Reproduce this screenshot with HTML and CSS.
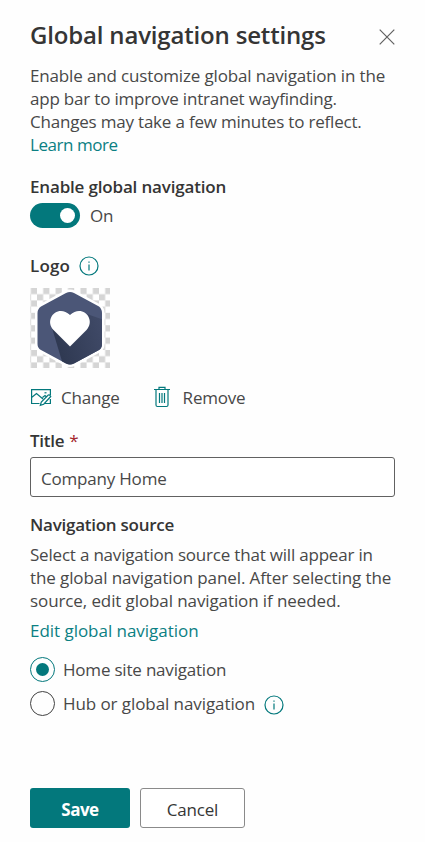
FILE: index.html
```html
<!DOCTYPE html>
<html lang="en">
<head>
<meta charset="utf-8">
<title>Global navigation settings</title>
<link rel="stylesheet" href="styles.css">
</head>
<body>
<main class="panel">
  <header class="header">
    <h1>Global navigation settings</h1>
    <button class="close" aria-label="Close"><svg width="16" height="16" viewBox="0 0 16 16"><path d="M.7.7l14.6 14.6M15.3.7L.7 15.3"/></svg></button>
  </header>
  <p class="intro"><span class="i1">Enable and customize global navigation in the</span><br><span class="i2">app bar to improve intranet wayfinding.</span><br><span class="i3">Changes may take a few minutes to reflect.</span><br><a class="learn">Learn more</a></p>
  <h2 class="enable-label"><span class="t-enable">Enable global navigation</span></h2>
  <div class="toggle-row"><span class="toggle"><span class="thumb"></span></span><span class="t-on">On</span></div>
  <div class="logo-label"><h2><span class="t-logo">Logo</span></h2><svg class="info" width="20" height="20" viewBox="0 0 20 20"><circle cx="10" cy="10" r="9"/><path d="M10 8.500v6M10 5.500v1.300"/></svg></div>
  <svg class="logo" width="80" height="80" viewBox="0 0 80 80">
    <defs>
      <pattern id="checks" x="-5.4" width="12.4" height="12.4" patternUnits="userSpaceOnUse"><path fill="#d5d5d5" d="M0 6.200h6.200v6.200H0zM6.200 0h6.200v6.200H6.200z"/></pattern>
      <linearGradient id="shade" x1="0" y1=".7" x2="1" y2=".4"><stop offset="0" stop-color="#2d374f"/><stop offset="1" stop-color="#414b69"/></linearGradient>
      <clipPath id="hex"><path d="M36 5Q40 2.800 44 5L69 18.500Q72 21 72 25V56Q72 60 69 62L44 75.500Q40 77.500 36 75.500L11 62Q7.500 60 7.500 56V25Q7.500 21 11 18.500Z"/></clipPath>
    </defs>
    <path fill="#fff" d="M0 0h80v80H0z"/><path fill="url(#checks)" d="M0 0h80v80H0z"/>
    <path fill="#fff" stroke="#fff" stroke-width="5" d="M36 5Q40 2.800 44 5L69 18.500Q72 21 72 25V56Q72 60 69 62L44 75.500Q40 77.500 36 75.500L11 62Q7.500 60 7.500 56V25Q7.500 21 11 18.500Z"/>
    <g clip-path="url(#hex)"><path fill="#4b5677" d="M0 0h80v80H0z"/><path fill="url(#shade)" d="M22 40L34 80H80V34L57 26Z"/></g>
    <path fill="#fff" d="M40 58.500L23.500 42C13.500 31 28 15.500 40 27C52 15.500 66.500 31 56.500 42Z"/>
  </svg>
  <div class="actions">
    <button class="change"><svg width="22" height="20" viewBox="0 0 22 20"><path d="M9.500 16.500H1.600V2.600H20.400V8M1.600 10.500L6.500 6.500L13 12M12.500 10.500L15 8.500L16 9.500M10.300 18.300L11.300 15L18.200 8Q20 7.500 20.700 9.500L13.700 17.200ZM15 16.500H20.400V12"/><path d="M14.500 5.800h2"/></svg><span class="t-change">Change</span></button>
    <button class="remove"><svg width="18" height="22" viewBox="0 0 18 22"><path d="M1 3.500h16M6 3.500V1.300h6V3.500M3 3.500V19Q3 20.500 4.500 20.500H13.500Q15 20.500 15 19V3.500M6.500 7v10M9 7v10M11.500 7v10"/></svg><span class="t-remove">Remove</span></button>
  </div>
  <h2 class="title-label"><span class="t-title">Title</span><b>*</b></h2>
  <div class="field"><span class="t-company">Company Home</span></div>
  <h2 class="source-label"><span class="t-source">Navigation source</span></h2>
  <p class="source"><span class="s1">Select a navigation source that will appear in</span><br><span class="s2">the global navigation panel. After selecting the</span><br><span class="s3">source, edit global navigation if needed.</span></p>
  <div class="edit"><a class="t-edit">Edit global navigation</a></div>
  <div class="radio selected"><i></i><span class="t-home">Home site navigation</span></div>
  <div class="radio"><i></i><span class="t-hub">Hub or global navigation</span><svg class="info" width="20" height="20" viewBox="0 0 20 20"><circle cx="10" cy="10" r="9"/><path d="M10 8.500v6M10 5.500v1.300"/></svg></div>
  <footer class="footer"><button class="save"><span class="t-save">Save</span></button><button class="cancel"><span class="t-cancel">Cancel</span></button></footer>
</main>
</body>
</html>
```
FILE: styles.css
```css
* { box-sizing: border-box; }
body { margin: 0; background: #fefefe; color: #484848; font: 400 17px/23px "Open Sans", "Noto Sans", sans-serif; letter-spacing: -.2px; }
h1, h2, p { margin: 0; }
h1, h2 { color: #353535; font-weight: 600; }
h2 { height: 24px; font-size: 17px; line-height: 24px; letter-spacing: -.25px; }
button { padding: 0; border: 0; background: transparent; color: inherit; font: inherit; letter-spacing: inherit; }
svg { display: block; flex: none; fill: none; stroke-width: 1.2; }
span, a { white-space: nowrap; }
a { color: #0b8083; }
.panel { height: 842px; padding: 16px 30px 14px; overflow: hidden; }
.header { display: flex; justify-content: space-between; height: 48px; }
h1 { font-size: 24px; line-height: 38px; letter-spacing: -.17px; white-space: nowrap; }
.close { width: 16px; height: 16px; margin-top: 13px; stroke: #616161; }
.intro { height: 92px; }
.i1 { letter-spacing: -.15px; }
.learn { letter-spacing: -.45px; }
.enable-label { margin-top: 19px; letter-spacing: -.17px; }
.toggle-row { display: flex; align-items: center; gap: 10px; height: 25px; margin-top: 4px; }
.toggle { display: flex; align-items: center; justify-content: flex-end; width: 50px; height: 25px; padding-right: 5px; border-radius: 13px; background: #03787c; }
.thumb { width: 15px; height: 15px; border-radius: 50%; background: #fff; }
.logo-label { display: flex; align-items: center; gap: 9px; height: 24px; margin-top: 26px; }
.t-logo { letter-spacing: .15px; }
.info { stroke: #03787c; }
.logo { margin-top: 10px; }
.actions { display: flex; gap: 33px; height: 24px; margin-top: 17px; }
.actions button { display: flex; align-items: center; stroke: #03787c; }
.actions span { stroke: none; }
.change { gap: 9px; }
.remove { gap: 12px; }
.title-label { margin-top: 20px; }
.title-label b { margin-left: 5px; color: #a4262c; font-weight: 400; }
.field { display: flex; align-items: center; height: 40px; margin-top: 4px; padding: 3px 10px 0; border: 1px solid #616161; border-radius: 3px; background: #fff; }
.source-label { margin-top: 16px; }
.source { height: 69px; margin-top: 6px; }
.s2, .s3 { letter-spacing: -.1px; }
.edit { height: 24px; margin-top: 7px; letter-spacing: -.03px; }
.radio { display: flex; align-items: center; height: 25px; margin-top: 14px; }
.radio + .radio { margin-top: 9px; }
.t-hub { letter-spacing: -.08px; }
.radio i { display: flex; align-items: center; justify-content: center; width: 25px; height: 25px; margin-right: 8px; border: 1px solid #424242; border-radius: 50%; }
.radio.selected i { border-color: #03787c; }
.radio.selected i::after { width: 13px; height: 13px; border-radius: 50%; background: #03787c; content: ""; }
.radio .info { margin: 3px 0 0 9px; }
.footer { display: flex; gap: 10px; margin-top: 72px; }
.footer button { height: 40px; padding-top: 3px; border-radius: 3px; }
.save { width: 100px; background: #03787c; color: #fff; font-weight: 700; letter-spacing: -.5px; }
.cancel { width: 105px; border: 1px solid #8a8a8a !important; background: #fff; color: #363636; }
```
